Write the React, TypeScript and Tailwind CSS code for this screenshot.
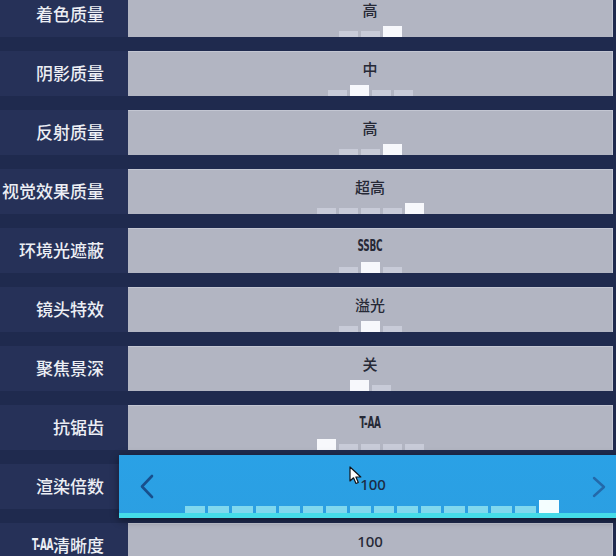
type Row = {
  label: string;
  value: string;
  count: number;
  active: number;
  condensed?: boolean;
};

const rows: Row[] = [
  { label: "着色质量", value: "高", count: 3, active: 2 },
  { label: "阴影质量", value: "中", count: 4, active: 1 },
  { label: "反射质量", value: "高", count: 3, active: 2 },
  { label: "视觉效果质量", value: "超高", count: 5, active: 4 },
  { label: "环境光遮蔽", value: "SSBC", count: 3, active: 1, condensed: true },
  { label: "镜头特效", value: "溢光", count: 3, active: 1 },
  { label: "聚焦景深", value: "关", count: 2, active: 0 },
  { label: "抗锯齿", value: "T-AA", count: 5, active: 0, condensed: true },
];

const cjk = "font-['Noto_Sans','Noto_Sans_CJK_SC',sans-serif]";
const narrow = "font-['DejaVu_Sans_Condensed','Noto_Sans_CJK_SC',sans-serif]";

function Segments({ count, active }: { count: number; active: number }) {
  return (
    <div className="flex items-end justify-center gap-[3px]">
      {Array.from({ length: count }).map((_, i) => (
        <div
          key={i}
          className={
            i === active
              ? "h-[11px] w-[19px] bg-[#f7f8fc]"
              : "h-[6px] w-[19px] bg-[#c8cbd8]"
          }
        />
      ))}
    </div>
  );
}

function Label({ children }: { children: React.ReactNode }) {
  return (
    <div
      className={`flex h-full w-[128px] shrink-0 items-center justify-end bg-[#263158] pr-[24px] text-[17px] font-medium text-[#eceef4] ${cjk}`}
    >
      {children}
    </div>
  );
}

function Narrow({ children, className = "" }: { children: React.ReactNode; className?: string }) {
  return (
    <span
      className={`inline-block scale-x-[0.66] text-[15px] font-bold tracking-[-0.3px] ${narrow} ${className}`}
    >
      {children}
    </span>
  );
}

function Value({ row }: { row: Row }) {
  return (
    <div
      className={`flex h-[20px] items-center justify-center text-[#262936] ${cjk} text-[15px] font-medium`}
    >
      {row.condensed ? <Narrow className="origin-center">{row.value}</Narrow> : row.value}
    </div>
  );
}

function Cursor() {
  return (
    <svg
      className="absolute left-[230px] top-[11px]"
      width="14"
      height="19"
      viewBox="0 0 14 19"
    >
      <path
        d="M1 1 L1 15 L4.5 11.8 L7 17.5 L9.3 16.5 L6.9 11 L11.8 11 Z"
        fill="#ffffff"
        stroke="#111318"
        strokeWidth="1.2"
        strokeLinejoin="round"
      />
    </svg>
  );
}

export default function App() {
  return (
    <div className="h-[556px] w-[616px] overflow-hidden bg-[#1f2a4e]">
      <div className="-mt-[8px] flex flex-col gap-[14px]">
        {rows.map((row) => (
          <div key={row.label} className="flex h-[45px]">
            <Label>{row.label}</Label>
            <div className="mr-[3px] flex flex-1 flex-col justify-between border-t border-r border-[#c3c6d2] bg-[#b2b5c2] pt-[7px]">
              <Value row={row} />
              <Segments count={row.count} active={row.active} />
            </div>
          </div>
        ))}

        {/* selected row */}
        <div className="relative z-10 flex h-[45px]">
          <Label>渲染倍数</Label>
          <div className="relative -my-[9px] -ml-[9px] -mr-[9px] flex flex-1 flex-col bg-gradient-to-b from-[#2aa1e6] to-[#2b9fe2] shadow-[0_2px_8px_rgba(0,0,0,0.45)]">
            <div className="flex flex-1 items-center justify-between pl-[20px] pr-[18px] pt-[13px]">
              <svg className="mt-[5px]" width="15" height="25" viewBox="0 0 15 25">
                <path
                  d="M13 2 L3 12.5 L13 23"
                  fill="none"
                  stroke="#184f8c"
                  strokeWidth="2.6"
                  strokeLinecap="round"
                  strokeLinejoin="round"
                />
              </svg>
              <div
                className={`flex-1 text-center text-[15px] font-medium text-[#1c2c45] ${cjk}`}
              >
                100
              </div>
              <svg className="mt-[5px]" width="15" height="22" viewBox="0 0 15 22">
                <path
                  d="M2 2 L12 11 L2 20"
                  fill="none"
                  stroke="#2369aa"
                  strokeWidth="2.4"
                  strokeLinecap="round"
                  strokeLinejoin="round"
                />
              </svg>
            </div>
            <div className="flex items-end justify-center gap-[3px]">
              {Array.from({ length: 16 }).map((_, i) => (
                <div
                  key={i}
                  className={
                    i === 15
                      ? "h-[13px] w-[20.6px] bg-[#f4feff]"
                      : "h-[7px] w-[20.6px] bg-[#80d8ee]"
                  }
                />
              ))}
            </div>
            <div className="h-[5px] bg-[#45dce8]" />
            <Cursor />
          </div>
        </div>

        <div className="flex h-[45px]">
          <Label>
            <Narrow className="origin-right">T-AA</Narrow>
            清晰度
          </Label>
          <div className="mr-[3px] flex flex-1 flex-col border-t border-r border-[#c3c6d2] bg-[#b2b5c2] pt-[7px]">
            <Value row={{ label: "", value: "100", count: 0, active: 0 }} />
          </div>
        </div>
      </div>
    </div>
  );
}
